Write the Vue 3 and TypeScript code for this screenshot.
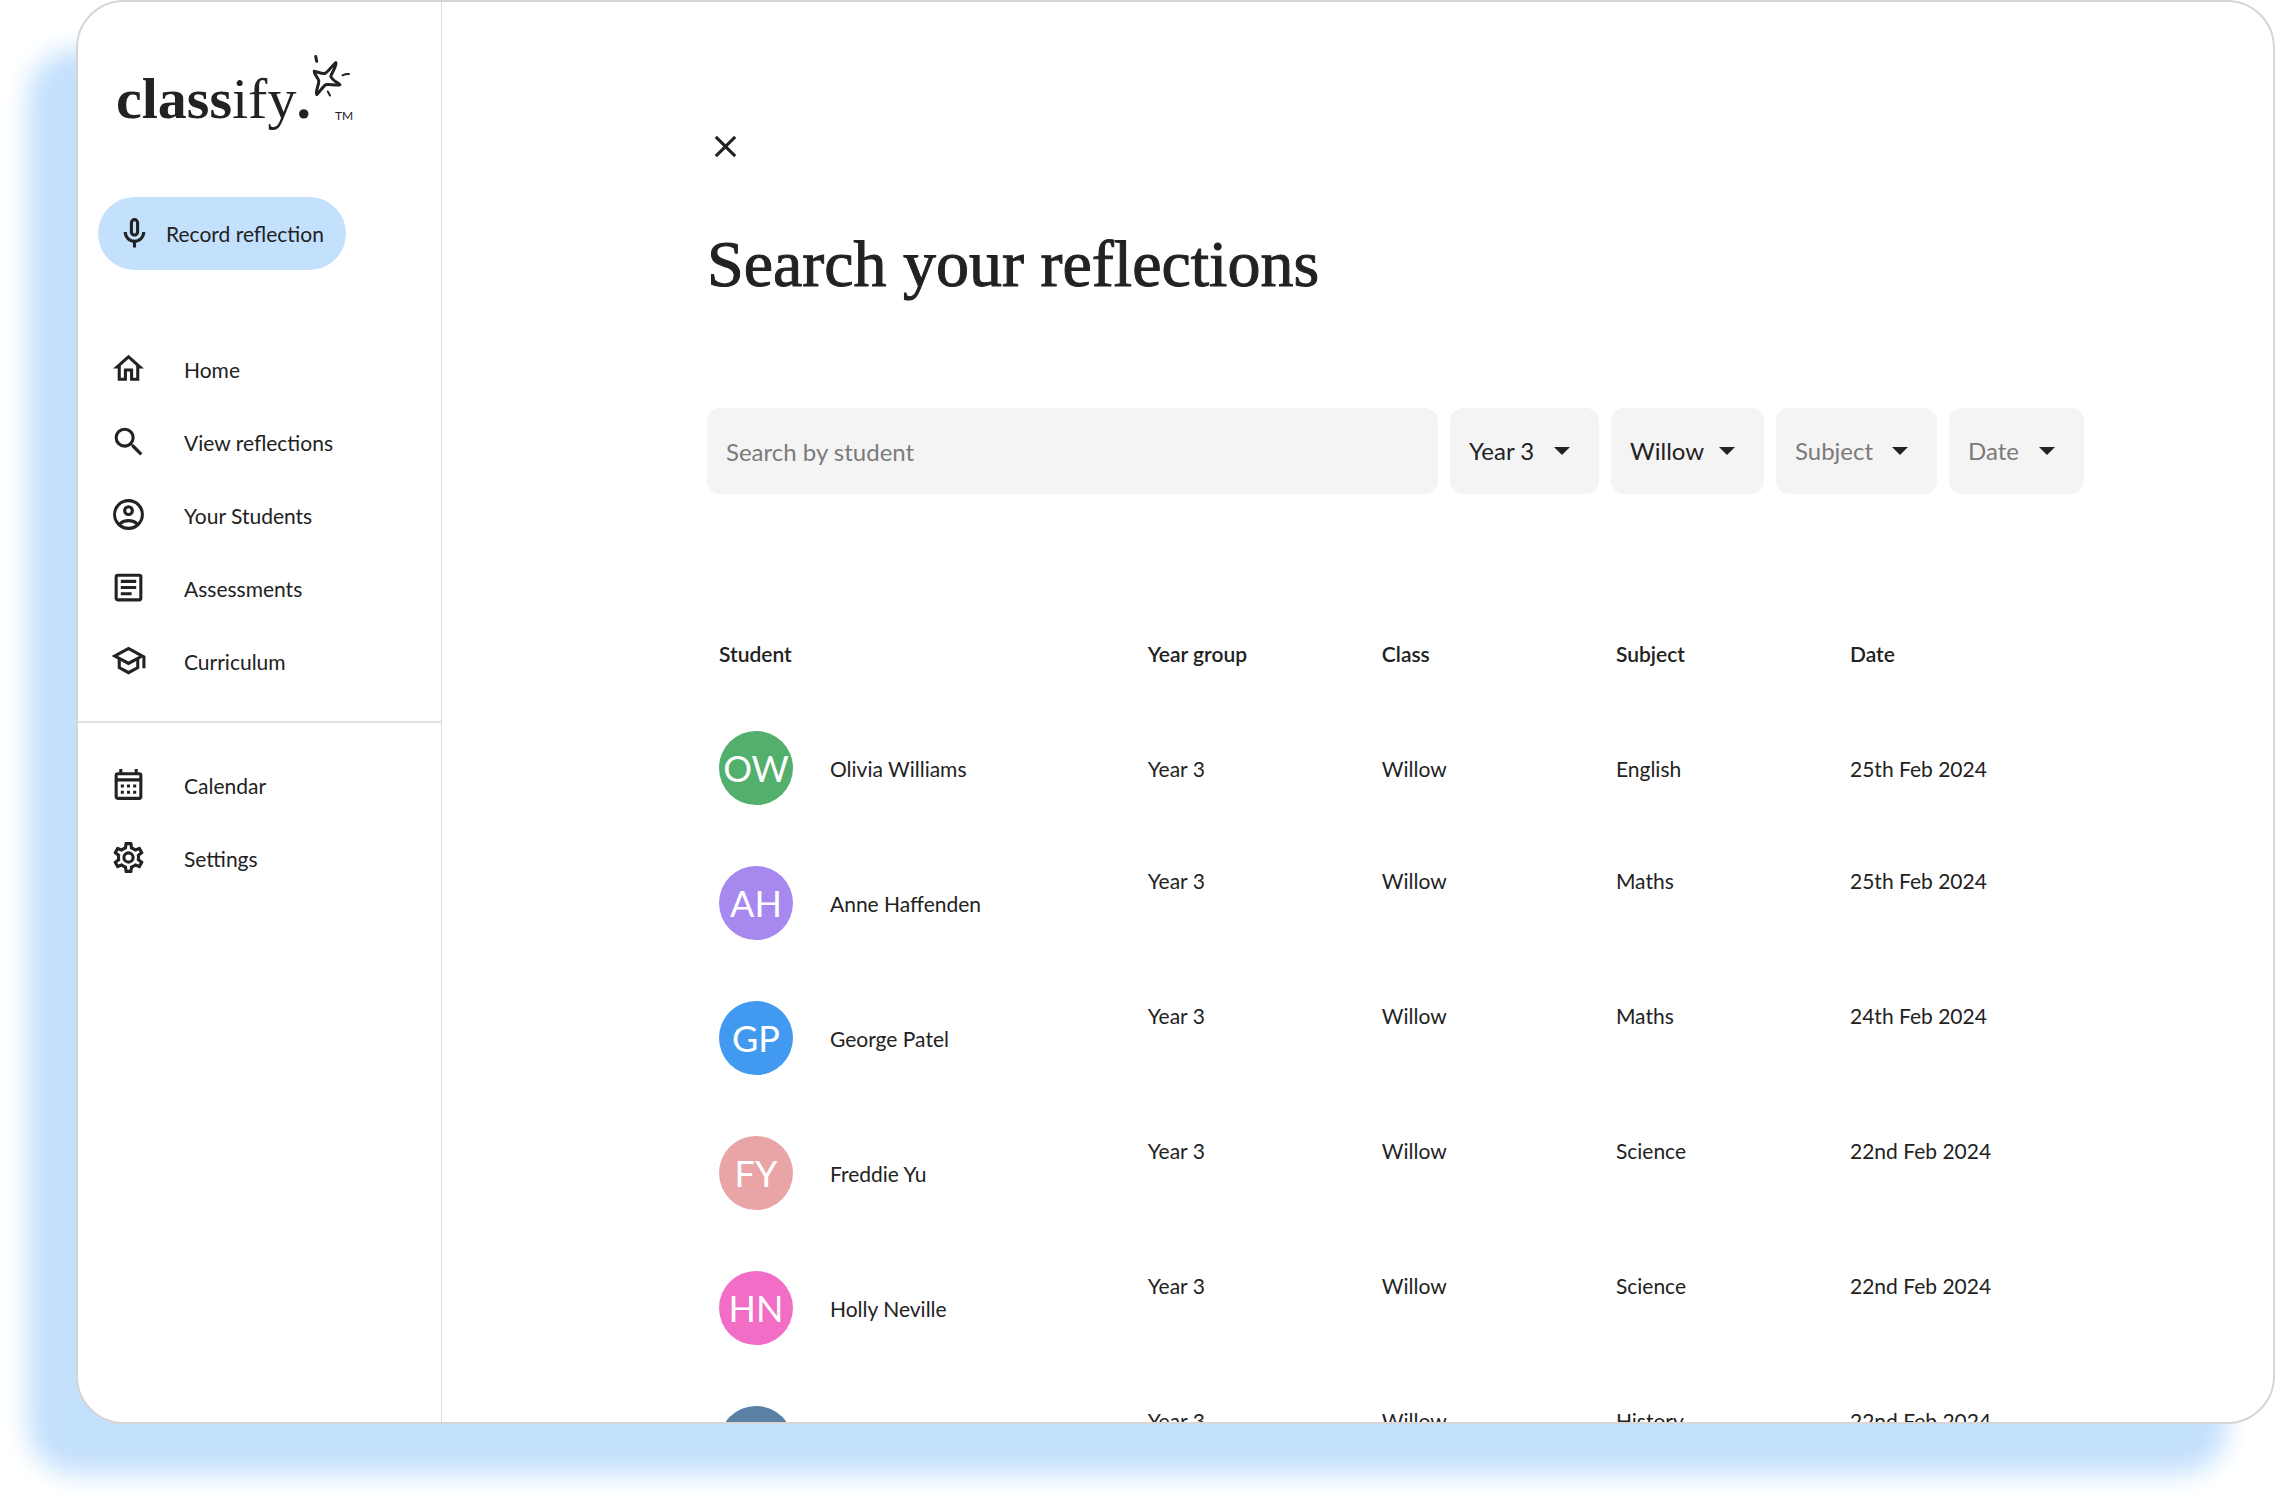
<script setup lang="ts">
import { ref } from 'vue'

interface NavItem {
  label: string
  path: string
}

interface Filter {
  id: string
  label: string
  options: string[]
  chosen: boolean
}

interface Reflection {
  initials: string
  name: string
  tone: string
  year: string
  group: string
  subject: string
  date: string
}

const primaryNav: NavItem[] = [
  { label: 'Home', path: 'M12 5.69l5 4.5V18h-2v-6H9v6H7v-7.81l5-4.5M12 3L2 12h3v8h6v-6h2v6h6v-8h3L12 3z' },
  {
    label: 'View reflections',
    path: 'M15.5 14h-.79l-.28-.27A6.47 6.47 0 0 0 16 9.5 6.5 6.5 0 1 0 9.5 16c1.61 0 3.09-.59 4.23-1.57l.27.28v.79l5.6 5.59 1.4-1.4L15.5 14zm-6 0a4.5 4.5 0 1 1 0-9 4.5 4.5 0 0 1 0 9z',
  },
  {
    label: 'Your Students',
    path: 'M12 2a10 10 0 1 0 0 20 10 10 0 0 0 0-20zM7.35 18.5a7.95 7.95 0 0 1 9.3 0 7.95 7.95 0 0 1-9.3 0zm10.79-1.38a9.95 9.95 0 0 0-12.28 0A7.96 7.96 0 0 1 12 4a8 8 0 0 1 6.14 13.12zM12 6a3.5 3.5 0 1 0 0 7 3.5 3.5 0 0 0 0-7zm0 5a1.5 1.5 0 1 1 0-3 1.5 1.5 0 0 1 0 3z',
  },
  {
    label: 'Assessments',
    path: 'M19 5v14H5V5h14m0-2H5a2 2 0 0 0-2 2v14c0 1.1.9 2 2 2h14a2 2 0 0 0 2-2V5a2 2 0 0 0-2-2zm-5 14H7v-2h7v2zm3-4H7v-2h10v2zm0-4H7V7h10v2z',
  },
  {
    label: 'Curriculum',
    path: 'M12 3L1 9l4 2.18v6L12 21l7-3.82v-6l2-1.09V17h2V9L12 3zm6.82 6L12 12.72 5.18 9 12 5.28 18.82 9zM17 15.99l-5 2.73-5-2.73v-3.72L12 15l5-2.73v3.72z',
  },
]

const secondaryNav: NavItem[] = [
  {
    label: 'Calendar',
    path: 'M19 4h-1V2h-2v2H8V2H6v2H5a2 2 0 0 0-2 2v14c0 1.1.9 2 2 2h14a2 2 0 0 0 2-2V6a2 2 0 0 0-2-2zm0 16H5V10h14v10zm0-12H5V6h14v2zM9 14H7v-2h2v2zm4 0h-2v-2h2v2zm4 0h-2v-2h2v2zm-8 4H7v-2h2v2zm4 0h-2v-2h2v2zm4 0h-2v-2h2v2z',
  },
  {
    label: 'Settings',
    path: 'M19.43 12.98c.04-.32.07-.64.07-.98 0-.34-.03-.66-.07-.98l2.11-1.65c.19-.15.24-.42.12-.64l-2-3.46a.5.5 0 0 0-.61-.22l-2.49 1c-.52-.4-1.08-.73-1.69-.98l-.38-2.65A.49.49 0 0 0 14 2h-4a.49.49 0 0 0-.49.42l-.38 2.65c-.61.25-1.17.59-1.69.98l-2.49-1a.5.5 0 0 0-.61.22l-2 3.46c-.13.22-.07.49.12.64l2.11 1.65c-.04.32-.07.65-.07.98s.03.66.07.98l-2.11 1.65a.5.5 0 0 0-.12.64l2 3.46c.12.22.39.3.61.22l2.49-1c.52.4 1.08.73 1.69.98l.38 2.65c.03.24.24.42.49.42h4c.25 0 .46-.18.49-.42l.38-2.65c.61-.25 1.17-.59 1.69-.98l2.49 1c.23.09.49 0 .61-.22l2-3.46a.5.5 0 0 0-.12-.64l-2.11-1.65zm-1.98-1.71c.04.31.05.52.05.73s-.02.43-.05.73l-.14 1.13.89.7 1.08.84-.7 1.21-1.27-.51-1.04-.42-.9.68c-.43.32-.84.56-1.25.73l-1.06.43-.16 1.13-.2 1.35h-1.4l-.19-1.35-.16-1.13-1.06-.43a5.67 5.67 0 0 1-1.23-.71l-.91-.7-1.06.43-1.27.51-.7-1.21 1.08-.84.89-.7-.14-1.13A8.2 8.2 0 0 1 6.5 12c0-.2.02-.43.05-.73l.14-1.13-.89-.7-1.08-.84.7-1.21 1.27.51 1.04.42.9-.68c.43-.32.84-.56 1.25-.73l1.06-.43.16-1.13.2-1.35h1.39l.19 1.35.16 1.13 1.06.43c.43.18.83.41 1.23.71l.91.7 1.06-.43 1.27-.51.7 1.21-1.07.85-.89.7.14 1.13zM12 8a4 4 0 1 0 0 8 4 4 0 0 0 0-8zm0 6a2 2 0 1 1 0-4 2 2 0 0 1 0 4z',
  },
]

const filters: Filter[] = [
  { id: 'year', label: 'Year group', options: ['Year 3'], chosen: true },
  { id: 'class', label: 'Class', options: ['Willow'], chosen: true },
  { id: 'subject', label: 'Subject', options: ['Subject'], chosen: false },
  { id: 'date', label: 'Date', options: ['Date'], chosen: false },
]

const columns = ['Student', 'Year group', 'Class', 'Subject', 'Date']

const reflections: Reflection[] = [
  { initials: 'OW', name: 'Olivia Williams', tone: 'green', year: 'Year 3', group: 'Willow', subject: 'English', date: '25th Feb 2024' },
  { initials: 'AH', name: 'Anne Haffenden', tone: 'violet', year: 'Year 3', group: 'Willow', subject: 'Maths', date: '25th Feb 2024' },
  { initials: 'GP', name: 'George Patel', tone: 'blue', year: 'Year 3', group: 'Willow', subject: 'Maths', date: '24th Feb 2024' },
  { initials: 'FY', name: 'Freddie Yu', tone: 'rose', year: 'Year 3', group: 'Willow', subject: 'Science', date: '22nd Feb 2024' },
  { initials: 'HN', name: 'Holly Neville', tone: 'pink', year: 'Year 3', group: 'Willow', subject: 'Science', date: '22nd Feb 2024' },
  { initials: '', name: '', tone: 'steel', year: 'Year 3', group: 'Willow', subject: 'History', date: '22nd Feb 2024' },
]

const query = ref('')
</script>

<template>
  <div class="stage">
    <div class="window">
      <aside class="sidebar">
        <div class="logo">
          <span class="wordmark"><b>class</b>ify<b>.</b></span>
          <span class="flourish">
            <svg class="star" viewBox="0 0 40 44" aria-hidden="true">
              <path class="outline" d="M2.2 17.2C6 18 9.5 20 13 19.5C16.5 17.5 20.5 11 23.8 8.6C25.5 11.5 19.5 18.5 18.8 22.5C20.5 26.5 25.5 28.5 28 30.8C23.5 32 17.5 29.6 14 30.6C10.5 32.5 7.5 38.5 4.8 40.6C3.2 37 7 31 6.8 27C6.2 23.5 2 20.5 2.2 17.2Z" />
              <path class="ray" d="M3.7 2.4L4.7 7.2" />
              <path class="ray fine" d="M30.5 21.3C32.5 20.3 34.5 19.9 37 20" />
              <path class="ray fine" d="M15.8 37.5L18 41.5" />
            </svg>
            <span class="tm">TM</span>
          </span>
        </div>

        <button class="record" type="button">
          <svg class="icon" viewBox="0 0 24 24" aria-hidden="true">
            <path d="M12 14c1.66 0 3-1.34 3-3V5a3 3 0 0 0-6 0v6c0 1.66 1.34 3 3 3zm-1-9c0-.55.45-1 1-1s1 .45 1 1v6c0 .55-.45 1-1 1s-1-.45-1-1V5zm6 6a5 5 0 0 1-10 0H5c0 3.53 2.61 6.43 6 6.92V21h2v-3.08c3.39-.49 6-3.39 6-6.92h-2z" />
          </svg>
          Record reflection
        </button>

        <nav class="nav">
          <a v-for="item in primaryNav" :key="item.label" class="nav-item" href="#">
            <svg class="icon" viewBox="0 0 24 24" aria-hidden="true"><path :d="item.path" fill-rule="evenodd" /></svg>
            <span class="label">{{ item.label }}</span>
          </a>
        </nav>
        <nav class="nav secondary">
          <a v-for="item in secondaryNav" :key="item.label" class="nav-item" href="#">
            <svg class="icon" viewBox="0 0 24 24" aria-hidden="true"><path :d="item.path" fill-rule="evenodd" /></svg>
            <span class="label">{{ item.label }}</span>
          </a>
        </nav>
      </aside>

      <main class="content">
        <button class="close" type="button" aria-label="Close">
          <svg class="icon" viewBox="0 0 24 24" aria-hidden="true">
            <path d="M19 6.41L17.59 5 12 10.59 6.41 5 5 6.41 10.59 12 5 17.59 6.41 19 12 13.41 17.59 19 19 17.59 13.41 12z" />
          </svg>
        </button>

        <h1 class="title">Search your reflections</h1>

        <form class="filters" @submit.prevent>
          <input v-model="query" class="search" type="text" placeholder="Search by student" aria-label="Search by student" />
          <div v-for="f in filters" :key="f.id" class="filter" :class="[f.id, { chosen: f.chosen }]">
            <select :aria-label="f.label">
              <option v-for="o in f.options" :key="o">{{ o }}</option>
            </select>
            <svg class="caret" viewBox="0 0 16 8" aria-hidden="true"><path d="M0 0h16L8 8z" /></svg>
          </div>
        </form>

        <table class="results">
          <thead>
            <tr>
              <th v-for="c in columns" :key="c" scope="col">{{ c }}</th>
            </tr>
          </thead>
          <tbody>
            <tr v-for="(r, i) in reflections" :key="i">
              <td>
                <div class="student">
                  <span class="avatar" :class="r.tone">{{ r.initials }}</span>
                  <span class="label">{{ r.name }}</span>
                </div>
              </td>
              <td>{{ r.year }}</td>
              <td>{{ r.group }}</td>
              <td>{{ r.subject }}</td>
              <td>{{ r.date }}</td>
            </tr>
          </tbody>
        </table>
      </main>
    </div>
  </div>
</template>

<style>
body {
  background: #fff;
}
</style>

<style scoped>
.stage {
  box-sizing: border-box;
  height: 100vh;
  padding: 0 0 75px 76px;
  overflow: hidden;
}

.window {
  display: flex;
  box-sizing: border-box;
  height: 100%;
  overflow: hidden;
  border: 2px solid #d6d6d6;
  border-radius: 48px;
  background: #fff;
  box-shadow: -48px 50px 26px #c3e0fd;
  color: #222;
  font-family: Lato, "Open Sans", sans-serif;
  font-size: 21px;
  line-height: 30px;
}

.icon {
  width: 37px;
  height: 37px;
  flex: none;
  fill: currentColor;
}

.label {
  padding-top: 2px;
}

.sidebar {
  flex: none;
  width: 363px;
  border-right: 1px solid #dcdcdc;
}

.logo {
  display: flex;
  height: 100px;
  padding: 52px 0 0 38px;
}

.wordmark {
  font-family: "Liberation Serif", serif;
  font-size: 58px;
  line-height: 90px;
}

.flourish {
  display: flex;
  flex-direction: column;
  padding-left: 1px;
}

.star {
  width: 40px;
  height: 44px;
}

.outline,
.ray {
  fill: none;
  stroke: #222;
  stroke-width: 3;
  stroke-linecap: round;
  stroke-linejoin: round;
}

.ray.fine {
  stroke-width: 2;
}

.tm {
  padding: 12px 0 0 23px;
  font-size: 12px;
  line-height: 12px;
}

button,
input,
select {
  border: 0;
  color: inherit;
  font: inherit;
}

.record {
  display: flex;
  align-items: center;
  gap: 13px;
  min-width: 248px;
  height: 73px;
  margin: 43px 0 0 20px;
  padding: 0 18px;
  border-radius: 37px;
  background: #c3e0fd;
}

.nav {
  padding: 62px 0 24px;
}

.nav.secondary {
  padding-top: 25px;
  border-top: 2px solid #e2e2e2;
}

.nav-item {
  display: flex;
  align-items: center;
  gap: 37px;
  height: 73px;
  padding-left: 32px;
  color: inherit;
  text-decoration: none;
}

.content {
  flex: 1;
  min-width: 0;
  padding: 126px 189px 0 265px;
}

.close {
  display: block;
  padding: 0;
  background: none;
}

.title {
  margin: 56px 0 108px;
  font-family: "Liberation Serif", serif;
  font-size: 66px;
  font-weight: 400;
  line-height: 72px;
  -webkit-text-stroke: 1px #222;
}

.filters {
  display: flex;
  gap: 12px;
  height: 86px;
  font-size: 24px;
}

.search,
.filter select {
  box-sizing: border-box;
  height: 100%;
  padding: 0 19px;
  border-radius: 13px;
  background: #f4f4f4;
}

.search {
  flex: 1;
  min-width: 0;
}

.search::placeholder {
  color: #7b7b7b;
  opacity: 1;
}

.filter {
  position: relative;
  flex: none;
  width: 149px;
  color: #7b7b7b;
}

.filter.class {
  width: 153px;
}

.filter.subject {
  width: 161px;
}

.filter.date {
  width: 135px;
}

.filter.chosen {
  color: #222;
}

.filter select {
  width: 100%;
  appearance: none;
}

.caret {
  position: absolute;
  top: 39px;
  right: 29px;
  width: 16px;
  height: 8px;
  fill: #222;
  pointer-events: none;
}

.results {
  width: 100%;
  margin-top: 113px;
  table-layout: fixed;
  border-collapse: collapse;
}

th,
td {
  box-sizing: border-box;
  padding: 0 12px;
  text-align: left;
}

th {
  width: 17%;
  height: 94px;
  font-weight: 600;
}

th:first-child {
  width: auto;
}

th:last-child {
  width: 246px;
}

td {
  height: 135px;
  padding-top: 30px;
  vertical-align: top;
}

tbody tr:first-child td:not(:first-child) {
  padding-bottom: 29px;
  vertical-align: middle;
}

.student {
  display: flex;
  align-items: center;
  gap: 37px;
}

.avatar {
  display: flex;
  align-items: center;
  justify-content: center;
  width: 74px;
  height: 74px;
  border-radius: 50%;
  color: #fff;
  font-size: 36px;
}

.green { background: #52af6c; }
.violet { background: #a688ee; }
.blue { background: #429af0; }
.rose { background: #e9a5a5; }
.pink { background: #f26dc5; }
.steel { background: #5a80a5; }
</style>
